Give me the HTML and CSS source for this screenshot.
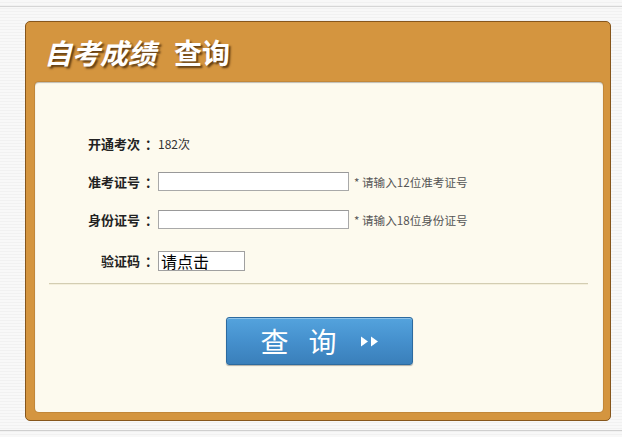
FILE: index.html
```html
<!DOCTYPE html>
<html lang="zh-CN">
<head>
<meta charset="utf-8">
<title>自考成绩查询</title>
<link rel="stylesheet" href="styles.css">
</head>
<body>
<div class="topline"></div>
<div class="wrap">
  <div class="panel">
    <div class="title"><span class="t-italic">自考成绩</span><span class="t-plain">查询</span></div>
    <div class="inner">
      <div class="form">
        <div class="row">
          <label class="lbl">开通考次<span class="colon">：</span></label>
          <span class="val">182次</span>
        </div>
        <div class="row">
          <label class="lbl">准考证号<span class="colon">：</span></label>
          <input class="field" type="text">
          <span class="hint">* 请输入12位准考证号</span>
        </div>
        <div class="row">
          <label class="lbl">身份证号<span class="colon">：</span></label>
          <input class="field" type="text">
          <span class="hint">* 请输入18位身份证号</span>
        </div>
        <div class="row row-code">
          <label class="lbl">验证码<span class="colon">：</span></label>
          <span class="code">请点击</span>
        </div>
      </div>
      <div class="divider"></div>
      <div class="actions">
        <button class="btn" type="button">
          <span class="btn-text">查</span><span class="btn-text btn-text-last">询</span>
          <svg class="btn-icon" width="20" height="11" viewBox="0 0 20 11"><polygon points="1,0.5 8,5.5 1,10.5" fill="#fff"/><polygon points="11,0.5 18,5.5 11,10.5" fill="#fff"/></svg>
        </button>
      </div>
    </div>
  </div>
</div>
<div class="bottomline"></div>
</body>
</html>
```

FILE: styles.css
```css
html, body {
  margin: 0;
  padding: 0;
}
body {
  width: 622px;
  height: 437px;
  overflow: hidden;
  font-family: "Noto Sans CJK SC", "Liberation Sans", sans-serif;
  background: repeating-linear-gradient(to bottom, #f8f8f8 0, #f8f8f8 2px, #f1f1f1 2px, #f1f1f1 3px);
}
.topline {
  height: 6px;
  border-bottom: 1px solid #d6d6d6;
}
.wrap {
  padding: 14px 11px 0 25px;
}
.panel {
  box-sizing: border-box;
  width: 586px;
  height: 400px;
  background: #d4953f;
  border: 1px solid #86561c;
  border-radius: 5px;
  padding: 0 7px 8px 9px;
  display: flex;
  flex-direction: column;
}
.title {
  height: 60px;
  display: flex;
  align-items: center;
  padding-left: 9px;
  color: #fff;
  font-weight: bold;
  font-size: 28px;
  text-shadow: 2px 2px 2px rgba(50, 25, 0, 0.7);
}
.t-italic {
  font-style: italic;
  margin-right: 18px;
}
.inner {
  flex: 1;
  background: #fdfaee;
  border-radius: 4px;
  box-shadow: inset 0 1px 1px rgba(0,0,0,0.25), 0 0 0 1px rgba(140, 95, 40, 0.25);
  display: flex;
  flex-direction: column;
  padding-top: 52px;
}
.form {
  display: flex;
  flex-direction: column;
  gap: 19px;
}
.row {
  height: 19px;
  display: flex;
  align-items: center;
}
.row-code {
  margin-top: 3px;
}
.lbl {
  width: 120px;
  text-align: right;
  font-size: 13px;
  font-weight: bold;
  color: #222;
  margin-right: 3px;
}
.colon {
  padding-left: 5px;
  letter-spacing: -3px;
}
.val {
  font-size: 12px;
  color: #333;
}
.field {
  box-sizing: border-box;
  width: 191px;
  height: 19px;
  margin: 0;
  padding: 0 2px;
  border: 1px solid #a9a9a9;
  border-top-color: #999;
  background: #fff;
}
.hint {
  margin-left: 5px;
  font-size: 11.6px;
  color: #555;
}
.code {
  box-sizing: border-box;
  width: 87px;
  height: 20px;
  border: 1px solid #a0a0a0;
  background: #fff;
  font-size: 16px;
  line-height: 18px;
  color: #000;
  padding-left: 2px;
}
.divider {
  margin: 13px 15px 0 14px;
  height: 1px;
  background: #d3cdb2;
  border-bottom: 1px solid #f4efdc;
}
.actions {
  display: flex;
  justify-content: center;
  padding-top: 32px;
}
.btn {
  box-sizing: border-box;
  width: 187px;
  height: 48px;
  margin: 0;
  padding: 0 0 0 2px;
  border: 1px solid #2c6a9f;
  border-radius: 3px;
  background: linear-gradient(to bottom, #54a3dd 0%, #4590cd 50%, #3a7fba 100%);
  box-shadow: inset 0 1px 0 rgba(255,255,255,0.35), 0 1px 1px rgba(0,0,0,0.3);
  display: flex;
  align-items: center;
  justify-content: center;
  color: #fff;
  font-family: "Noto Sans CJK SC", sans-serif;
  font-size: 28px;
}
.btn-text {
  margin-right: 20px;
  line-height: 1;
}
.btn-text-last {
  margin-right: 23px;
}
.btn-icon {
  display: block;
}
.bottomline {
  margin-top: 9px;
  border-top: 1px solid #cfcfcf;
}
```
